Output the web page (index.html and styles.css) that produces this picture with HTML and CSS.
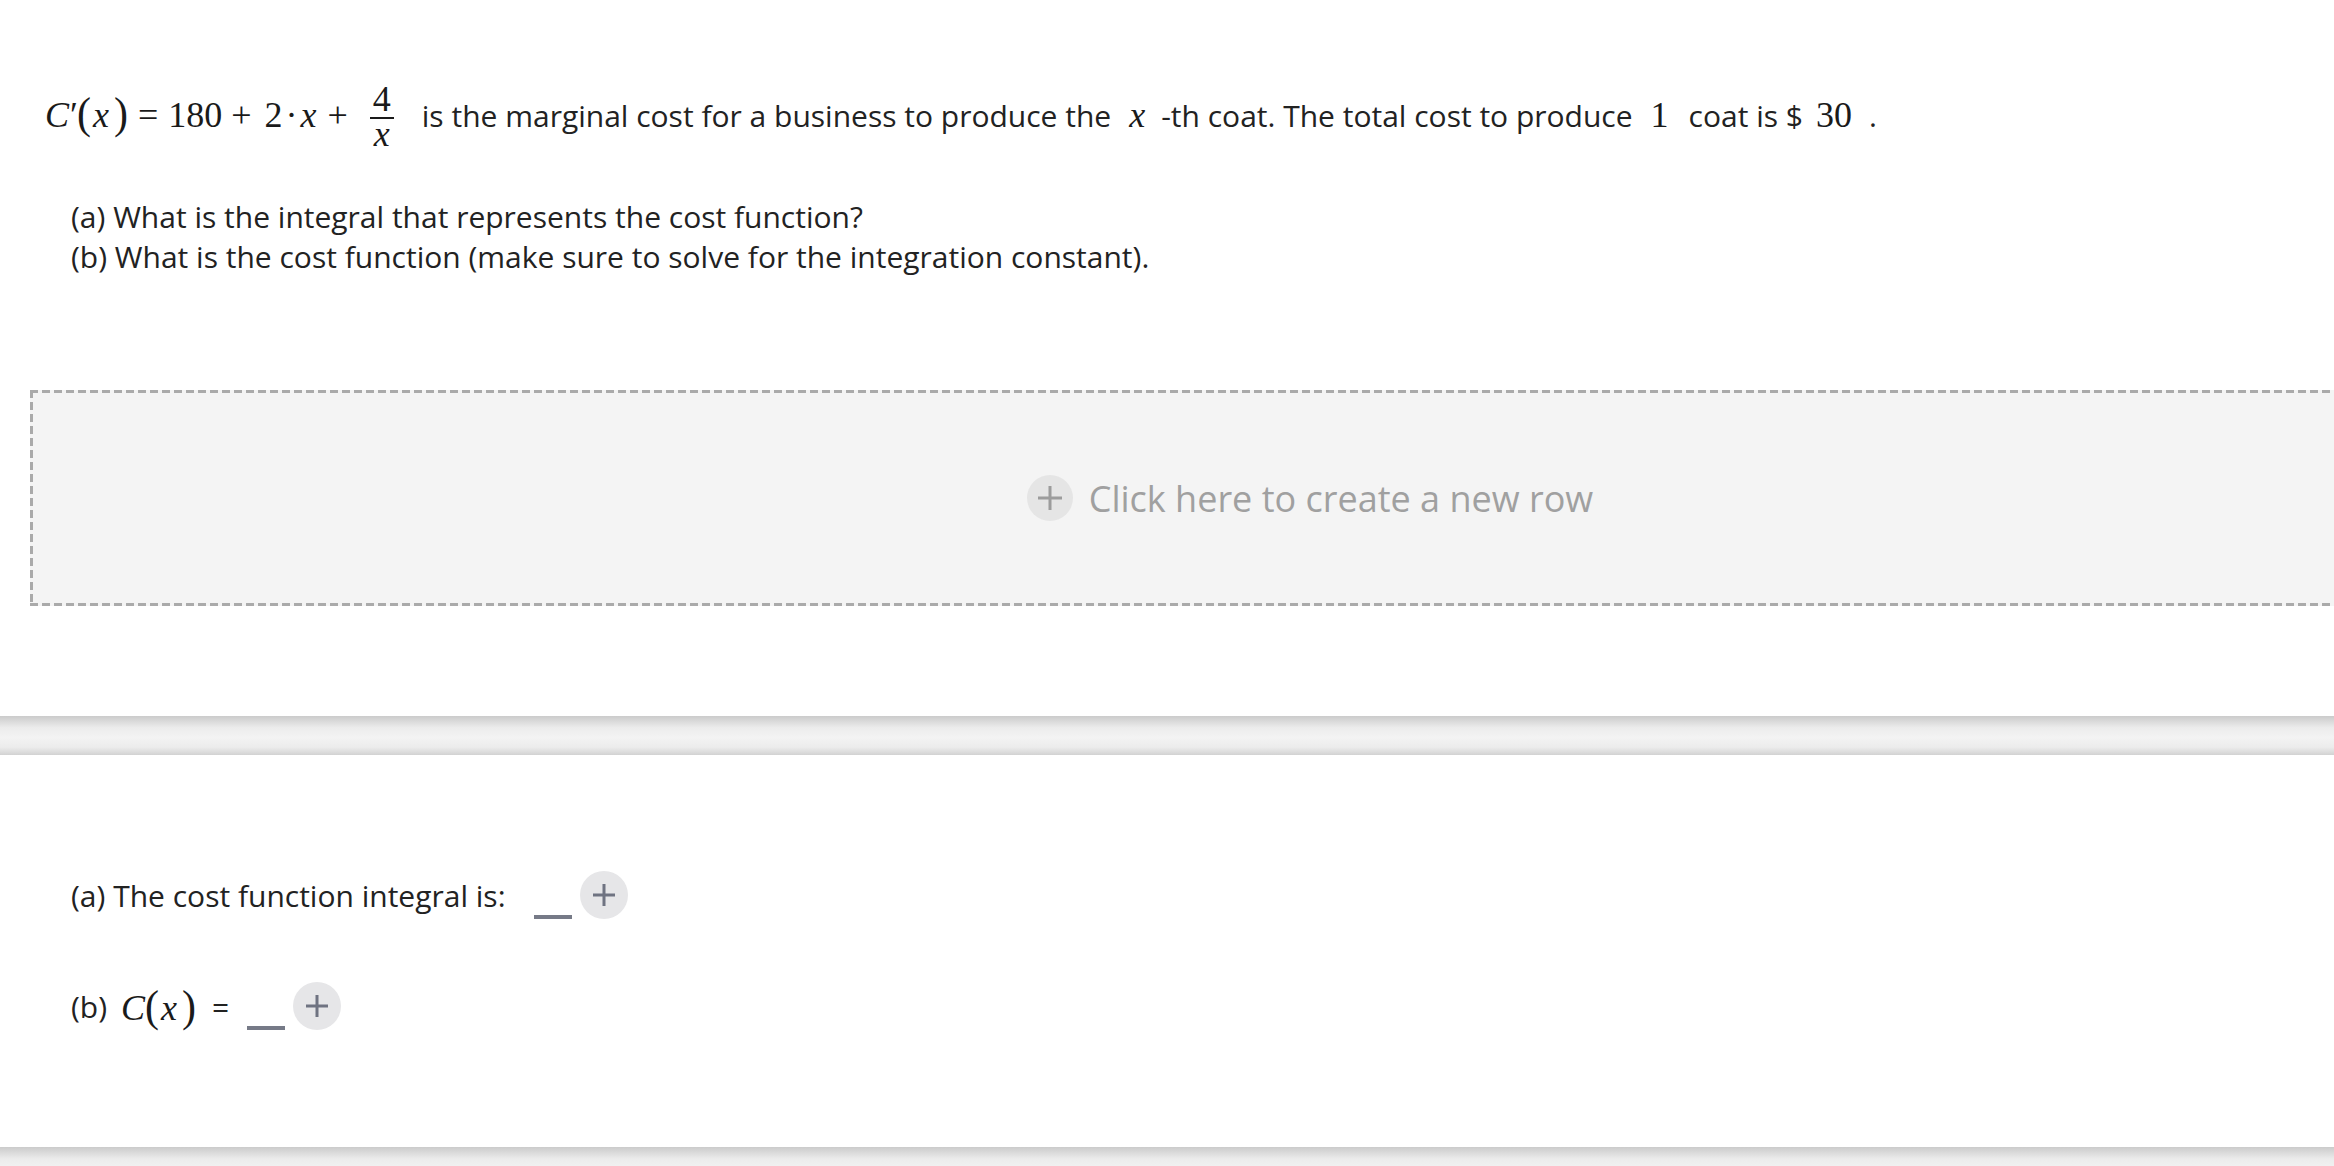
FILE: index.html
```html
<!DOCTYPE html>
<html lang="en">
<head>
  <meta charset="UTF-8" />
  <meta name="viewport" content="width=device-width, initial-scale=1.0"/>
  <title>Marginal Cost Question</title>
  <link rel="stylesheet" href="styles.css">
</head>
<body>
  <!-- Question text -->
  <div class="question">
    <p class="prompt"><span class="math"><i>C</i><span class="prime">′</span><span class="paren">(</span><i class="x-in">x</i><span class="paren">)</span><span class="rel">=</span>180<span class="bin">+</span><span class="two">2</span><span class="dot">·</span><i class="x-mid">x</i><span class="bin">+</span><span class="frac"><span class="num">4</span><span class="den"><i>x</i></span></span></span><span class="txt t-first">is the marginal cost for a business to produce the</span><span class="math m-x"><i>x</i></span><span class="txt t-th">-th coat. The total cost to produce</span><span class="math m-one">1</span><span class="txt t-coat">coat is $</span><span class="math m-30">30</span><span class="txt t-dot">.</span></p>
    <p class="parts">
      (a) What is the integral that represents the cost function?<br>
      (b) What is the cost function (make sure to solve for the integration constant).
    </p>
  </div>

  <!-- Work area -->
  <div class="new-row">
    <span class="add-icon">
      <svg width="26" height="26" viewBox="0 0 26 26"><path d="M13 1v24M1 13h24" stroke="#9c9c9c" stroke-width="3" fill="none"/></svg>
    </span>
    <span class="new-row-label">Click here to create a new row</span>
  </div>

  <div class="divider"></div>

  <!-- Answers -->
  <div class="answers">
    <div class="answer-row">
      <span>(a) The cost function integral is:</span>
      <span class="blank"></span>
      <span class="add-btn">
        <svg width="24" height="24" viewBox="0 0 24 24"><path d="M12 1v22M1 12h22" stroke="#6f7381" stroke-width="3" fill="none"/></svg>
      </span>
    </div>
    <div class="answer-row">
      <span>(b)</span>
      <span class="math"><i>C</i><span class="paren">(</span><i class="x-in">x</i><span class="paren">)</span></span>
      <span class="eq">=</span>
      <span class="blank short"></span>
      <span class="add-btn">
        <svg width="24" height="24" viewBox="0 0 24 24"><path d="M12 1v22M1 12h22" stroke="#6f7381" stroke-width="3" fill="none"/></svg>
      </span>
    </div>
  </div>

  <div class="divider bottom"></div>
</body>
</html>
```

FILE: styles.css
```css
* {
  box-sizing: border-box;
}

body {
  font-family: "Open Sans", "Noto Sans", sans-serif;
  font-size: 30px;
  color: #222;
  margin: 0;
  overflow: hidden;
  background: #fff;
}

p {
  margin: 0;
}

.question {
  padding: 84px 0 0 45px;
}

.prompt {
  line-height: 40px;
  white-space: nowrap;
}

.math {
  font-family: "Liberation Serif", "DejaVu Serif", serif;
  font-size: 36px;
  color: #1a1a1a;
}

.math i {
  font-style: italic;
}

.prime {
  margin: 0 -1px 0 1px;
}

.paren {
  font-size: 42px;
  display: inline-block;
  transform: scaleY(1.05);
}

.x-in {
  margin: 0 5px 0 2px;
}

.rel {
  margin: 0 10px;
}

.bin {
  margin: 0 9px;
}

.two {
  margin-left: 4px;
}

.dot {
  margin: 0 3px;
}

.x-mid {
  margin-right: 2px;
}

.frac {
  display: inline-block;
  vertical-align: -19px;
  text-align: center;
  margin-left: 13px;
}

.num {
  display: block;
  line-height: 30px;
  padding: 0 3px 3px;
  border-bottom: 2px solid #1a1a1a;
}

.den {
  display: block;
  line-height: 30px;
}

.t-first {
  margin-left: 28px;
}

.m-x {
  margin: 0 16px 0 18px;
}

.m-one {
  margin: 0 20px 0 18px;
}

.m-30 {
  margin: 0 17px 0 13px;
}

.parts {
  margin: 48px 0 0 26px;
  line-height: 40px;
}

.new-row {
  margin: 113px 0 0 30px;
  width: 2560px;
  height: 216px;
  background:
    repeating-linear-gradient(90deg, #aaa 0 8px, transparent 8px 12px) left top / 100% 3px no-repeat,
    repeating-linear-gradient(90deg, #aaa 0 8px, transparent 8px 12px) left bottom / 100% 3px no-repeat,
    repeating-linear-gradient(180deg, #aaa 0 8px, transparent 8px 12px) left top / 3px 100% no-repeat,
    #f4f4f4;
  display: flex;
  align-items: center;
  justify-content: center;
  gap: 16px;
}

.add-icon {
  width: 46px;
  height: 46px;
  border-radius: 50%;
  background: #e5e5e5;
  display: flex;
  align-items: center;
  justify-content: center;
}

.new-row-label {
  font-size: 36px;
  color: #a0a0a0;
}

.divider {
  margin-top: 110px;
  height: 39px;
  background: linear-gradient(#cbcbcb, #ececec 30%, #f3f3f3 55%, #ececec 80%, #d2d2d2);
}

.answers {
  padding: 116px 0 0 71px;
  display: flex;
  flex-direction: column;
  gap: 63px;
}

.answer-row {
  display: flex;
  align-items: center;
  height: 48px;
  white-space: nowrap;
}

.answer-row .math {
  margin-left: 14px;
}

.eq {
  margin-left: 16px;
}

.blank {
  width: 38px;
  height: 48px;
  border-bottom: 4px solid #767a87;
  margin-left: 28px;
}

.blank.short {
  margin-left: 18px;
}

.add-btn {
  width: 48px;
  height: 48px;
  border-radius: 50%;
  background: #e6e6e8;
  display: flex;
  align-items: center;
  justify-content: center;
  margin-left: 8px;
}

.divider.bottom {
  margin-top: 117px;
  height: 40px;
  background: linear-gradient(#cbcbcb, #ececec 30%, #f3f3f3 60%);
}
```
